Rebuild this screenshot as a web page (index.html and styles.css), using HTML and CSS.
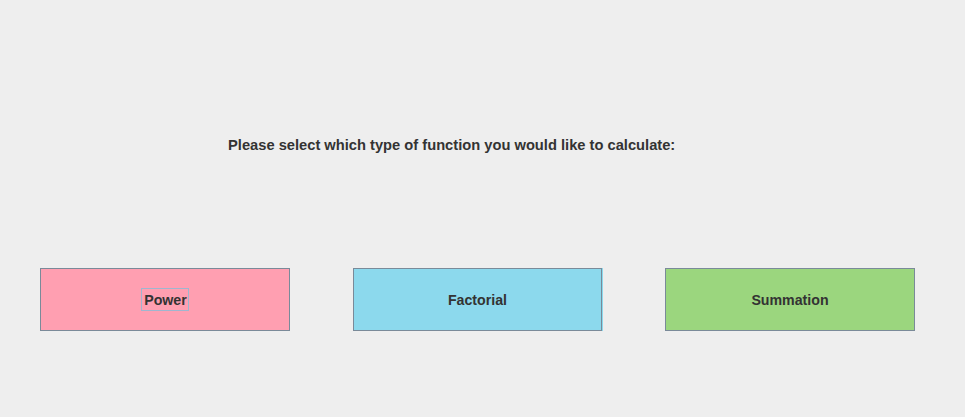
FILE: index.html
```html
<!DOCTYPE html>
<html>
<head>
<meta charset="utf-8">
<link rel="stylesheet" href="styles.css">
</head>
<body>
<div class="panel">
  <div class="prompt">Please select which type of function you would like to calculate:</div>
  <div class="buttons">
    <button class="btn power"><span class="focus">Power</span></button>
    <button class="btn factorial"><span class="label">Factorial</span></button>
    <button class="btn summation"><span class="label">Summation</span></button>
  </div>
</div>
</body>
</html>
```
FILE: styles.css
```css
html, body {
  margin: 0;
  padding: 0;
  background: #eeeeee;
}
.panel {
  width: 965px;
  height: 417px;
  display: flex;
  flex-direction: column;
  font-family: "Liberation Sans", Arial, sans-serif;
  font-weight: bold;
  color: #333333;
}
.prompt {
  padding-top: 137px;
  padding-left: 228px;
  font-size: 14.7px;
  line-height: 16px;
}
.buttons {
  display: flex;
  gap: 63px;
  padding-left: 40px;
  margin-top: 115px;
}
.btn {
  width: 250px;
  height: 63px;
  box-sizing: border-box;
  border: 1px solid #7a8a99;
  margin: 0;
  padding: 2px 0 0;
  font-family: "Liberation Sans", Arial, sans-serif;
  font-weight: bold;
  font-size: 14.2px;
  color: #333333;
  display: flex;
  align-items: center;
  justify-content: center;
}
.power { background: #ff9fb1; }
.factorial {
  background: #8cd9ed;
  width: 249px;
  box-shadow: 1px 0 0 #8cd9ed;
}
.summation { background: #9bd67e; }
.focus {
  border: 1px solid #9fb6cf;
  padding: 3px 1px 1px 2px;
  line-height: 17px;
  margin-top: -2px;
}
.label { line-height: 17px; }
```
